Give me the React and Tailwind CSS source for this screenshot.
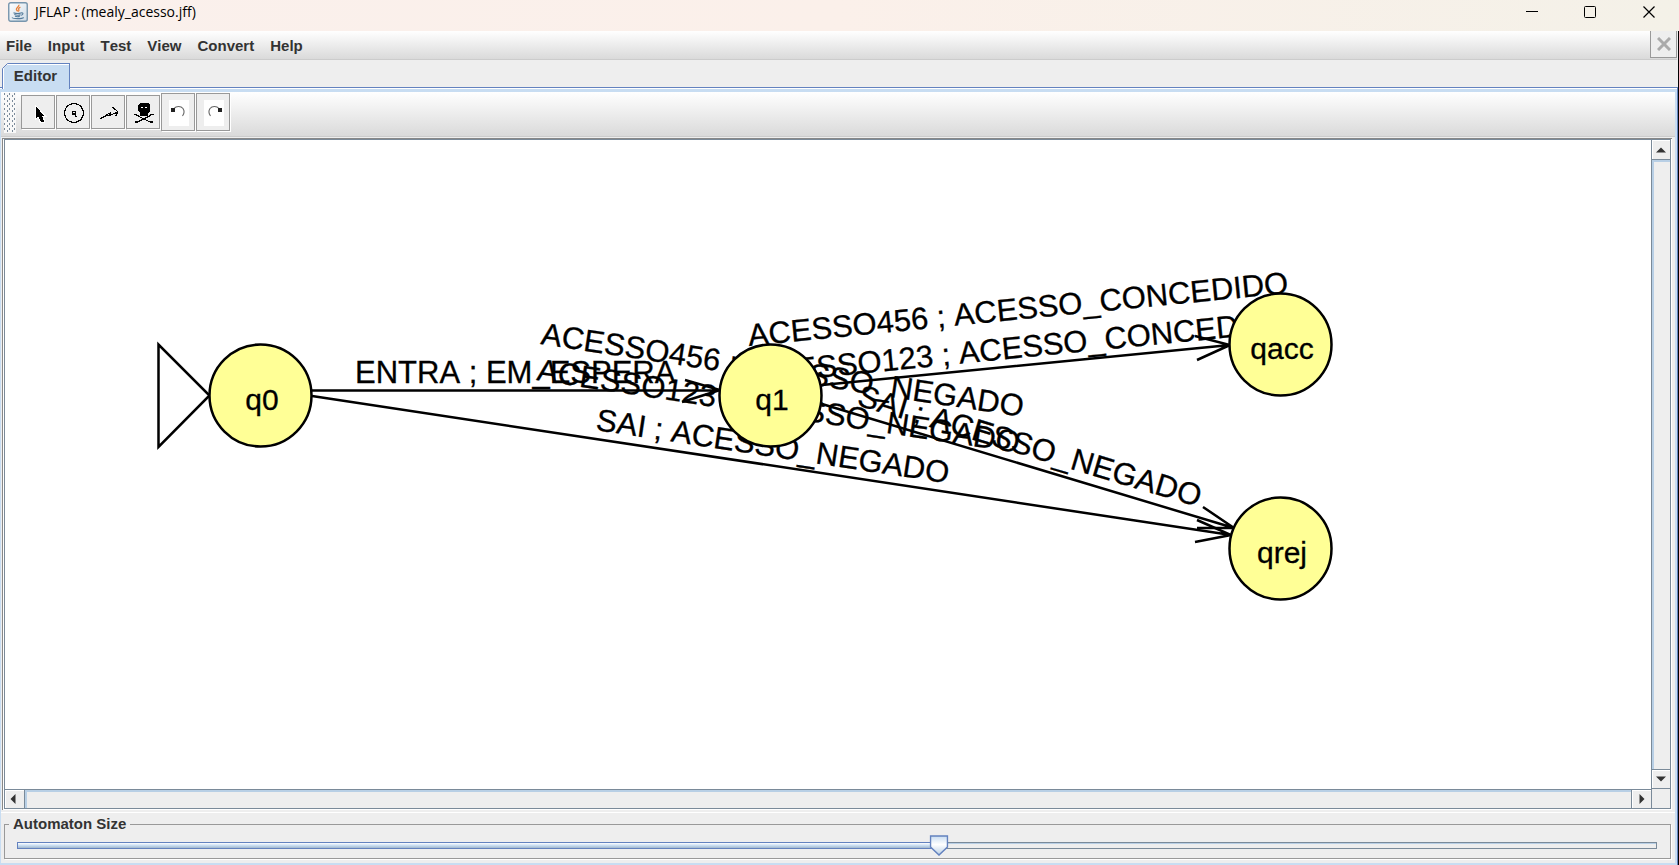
import { useState } from "react";

const MENUS = ["File", "Input", "Test", "View", "Convert", "Help"];

const STATES = [
  { name: "q0", x: 255, y: 255 },
  { name: "q1", x: 765, y: 255 },
  { name: "qacc", x: 1275, y: 204 },
  { name: "qrej", x: 1275, y: 408 },
];

const EDGES = [
  "M307 250.5H715M680 240L715 250L677 262",
  "M307 256L1226 395M1192 380L1226 395L1190 402",
  "M817 264L1229 388M1198 367L1229 388L1192 388",
  "M817 245L1225 205M1190 196L1225 205L1192 220",
];

const LABELS = [
  { text: "ENTRA ; EM_ESPERA", x: 350, y: 243, angle: 0 },
  { text: "ACESSO456 ; ACESSO_CONCEDIDO", x: 744, y: 206, angle: -5.6 },
  { text: "ACESSO123 ; ACESSO_CONCEDIDO", x: 749, y: 244, angle: -5.6 },
  { text: "ACESSO456 ; ACESSO_NEGADO", x: 535, y: 204, angle: 8.6 },
  { text: "ACESSO123 ; ACESSO_NEGADO", x: 531, y: 240, angle: 8.6 },
  { text: "SAI ; ACESSO_NEGADO", x: 590, y: 290, angle: 8.6 },
  { text: "SAI ; ACESSO_NEGADO", x: 851, y: 265, angle: 16.6 },
];

function JavaIcon() {
  return (
    <svg width="20" height="20" viewBox="0 0 20 20" aria-hidden="true">
      <defs>
        <linearGradient id="javaBg" x1="0" y1="0" x2="1" y2="1">
          <stop offset="0" stopColor="#ffffff" />
          <stop offset="1" stopColor="#cfdbe6" />
        </linearGradient>
      </defs>
      <rect x="0.75" y="0.75" width="18.5" height="18.5" rx="2" fill="url(#javaBg)" stroke="#7795ad" strokeWidth="1.4" />
      <path d="M10.8 2.8c.8 2-2.8 2.8-2.4 4.6.1.8 1 1.3 1.2 2M12.4 5.2c-1.6.7-2.2 1.4-1.6 2.4.4.7.1 1.3-.5 1.8" fill="none" stroke="#e8813a" strokeWidth="1.3" />
      <path d="M5.5 10.700c2 .8 6 .8 8 0M6.300 12.600c2 .7 4.800.700 6.300.1M7 14.300c1.500.5 3.500.5 4.800.1M13.300 10.900c2.200-.6 2.300 1.800-.3 2.400" fill="none" stroke="#557c9c" strokeWidth="1.1" />
      <path d="M4 15.500c1 1.500 10 1.500 11.700 0" fill="none" stroke="#557c9c" strokeWidth="1.1" />
    </svg>
  );
}

function CursorIcon() {
  return (
    <svg width="32" height="32" viewBox="0 0 32 32" shapeRendering="crispEdges" aria-hidden="true">
      <path d="M13 9v14.500l3-2.500 2.500 5.500h4v-2l-2-4.500h3z" fill="#000" stroke="#fff" strokeWidth="1" />
    </svg>
  );
}

function StateIcon() {
  return (
    <svg width="32" height="32" viewBox="0 0 32 32" shapeRendering="crispEdges" aria-hidden="true">
      <circle cx="17" cy="17" r="9.5" fill="none" stroke="#000" strokeWidth="1.2" />
      <path d="M15 15.500h3.500v5M15.500 15v3h3M18 20.500h2" fill="none" stroke="#000" strokeWidth="1.3" />
    </svg>
  );
}

function TransitionIcon() {
  return (
    <svg width="32" height="32" viewBox="0 0 32 32" shapeRendering="crispEdges" aria-hidden="true">
      <path d="M8 22.500l5-2 2-2 3-1.500v2.500l4-2 4-1.500M20.500 11.500l3 2 2.500 2.500-2.500 4M14 19.500h4" fill="none" stroke="#000" strokeWidth="1.2" />
    </svg>
  );
}

function SkullIcon() {
  return (
    <svg width="32" height="32" viewBox="0 0 32 32" shapeRendering="crispEdges" aria-hidden="true">
      <path d="M13 7h8l2 2v6l-2 2v3h-8v-3l-2-2V9z" fill="#000" />
      <path d="M14 11h2v1h-2zM18 11h2v1h-2z" fill="#fff" />
      <path d="M7 18.500h2l3 2 6 3 5 2.500h3M26.500 18.500h-2l-3 2-6 3-5 2.500h-3" fill="none" stroke="#000" strokeWidth="1.3" />
    </svg>
  );
}

function TurnIcon({ flip }) {
  return (
    <svg width="32" height="36" viewBox="0 0 32 36" aria-hidden="true">
      <rect x="7" y="6" width="20" height="26" fill="#fff" />
      <g transform={flip ? "translate(34 0) scale(-1 1)" : undefined}>
        <path d="M12 14.500C14.500 11.500 19 12 21 14.500C23 17.500 22 20 20.500 22" fill="none" stroke="#666" strokeWidth="1.1" />
        <path d="M9 14h4v4H9z" fill="#222" />
      </g>
    </svg>
  );
}

const TOOLS = [
  { label: "Attribute Editor", icon: <CursorIcon /> },
  { label: "State Creator", icon: <StateIcon /> },
  { label: "Transition Creator", icon: <TransitionIcon /> },
  { label: "Deleter", icon: <SkullIcon /> },
  { label: "Undo", icon: <TurnIcon />, tall: true },
  { label: "Redo", icon: <TurnIcon flip />, tall: true },
];

function TitleBar() {
  return (
    <header className="flex h-[31px] shrink-0 items-center bg-linear-to-r from-[#faf0ec] via-[#fbf0ea] to-[#f4f1e8] pl-2">
      <div className="-mt-2 flex items-center gap-[7px]">
        <JavaIcon />
        <h1 className="pt-px font-['Open_Sans','Noto_Sans',sans-serif] text-[14px] leading-5 text-black">JFLAP : (mealy_acesso.jff)</h1>
      </div>
      <div className="-mt-2 ml-auto flex h-6">
        <button aria-label="Minimize" className="flex w-[58px] items-center justify-center">
          <svg width="12" height="12" viewBox="0 0 12 12"><path d="M0 5.500h12" stroke="#000" fill="none" /></svg>
        </button>
        <button aria-label="Maximize" className="flex w-[58px] items-center justify-center">
          <svg width="12" height="12" viewBox="0 0 12 12"><rect x="0.5" y="0.5" width="11" height="11" rx="1" stroke="#000" fill="none" /></svg>
        </button>
        <button aria-label="Close" className="flex w-[60px] items-center justify-center">
          <svg width="12" height="12" viewBox="0 0 12 12"><path d="M0.500 0.500l11 11M11.500 0.500l-11 11" stroke="#000" strokeWidth="1.2" fill="none" /></svg>
        </button>
      </div>
    </header>
  );
}

function MenuBar() {
  return (
    <div className="flex h-[29px] shrink-0 border-b border-[#ccc] bg-linear-to-b from-white to-[#dadada]">
      <nav className="flex items-center gap-4 pl-[6px] [font-kerning:none]">
        {MENUS.map((menu) => (
          <button key={menu} className="pt-px text-[15px] leading-5 font-bold text-[#333]">{menu}</button>
        ))}
      </nav>
      <button aria-label="Close editor" className="ml-auto flex h-[27px] w-[27px] items-center justify-center border-x border-b border-[#999] bg-[#eee]">
        <svg width="14" height="14" viewBox="0 0 14 14"><path d="M1 1l12 12M13 1l-12 12" stroke="#aaa" strokeWidth="3" fill="none" /></svg>
      </button>
    </div>
  );
}

function Toolbar() {
  return (
    <div className="flex h-[45px] shrink-0 items-start border-b border-[#ccc] bg-linear-to-b from-white to-[#dadada] pt-px pl-[3px]">
      <svg width="12" height="40" aria-hidden="true">
        <defs>
          <pattern id="grip" width="5" height="5" patternUnits="userSpaceOnUse">
            <rect width="5" height="5" fill="#f8f8f8" />
            <rect width="1" height="2" fill="#7a8a99" />
            <rect x="3" y="2" width="1" height="2" fill="#7a8a99" />
          </pattern>
        </defs>
        <rect width="12" height="40" fill="url(#grip)" />
      </svg>
      <div className="ml-[5px] flex items-center gap-px">
        {TOOLS.map((tool) => (
          <button
            key={tool.label}
            aria-label={tool.label}
            className={`flex w-[34px] items-center justify-center border border-[#999] bg-[#eee] shadow-[1px_1px_0_#fff] ${tool.tall ? "h-[38px]" : "h-[34px]"}`}
          >
            {tool.icon}
          </button>
        ))}
      </div>
    </div>
  );
}

function Automaton() {
  return (
    <svg className="h-full w-full bg-white [font-kerning:none]" role="img" aria-label="Mealy machine">
      <g fill="#000" stroke="#000" strokeWidth="0.3" fontSize="31">
        {LABELS.map((l, i) => (
          <text key={i} transform={`translate(${l.x} ${l.y}) rotate(${l.angle})`}>{l.text}</text>
        ))}
      </g>
      <g fill="none" stroke="#000" strokeWidth="2.5">
        {EDGES.map((d) => <path key={d} d={d} />)}
      </g>
      <path d="M153.500 204.500V307L204.500 255.500z" fill="#fff" stroke="#000" strokeWidth="2.5" />
      {STATES.map((s) => (
        <g key={s.name}>
          <circle cx={s.x + 0.5} cy={s.y + 0.5} r="51" fill="#ffff96" stroke="#000" strokeWidth="2.5" />
          <text x={s.x + 2} y={s.y + 15} textAnchor="middle" fontSize="30" stroke="#000" strokeWidth="0.3">{s.name}</text>
        </g>
      ))}
    </svg>
  );
}

function ScrollArrow({ d, label, className }) {
  return (
    <button aria-label={label} className={`flex items-center justify-center border-[#7a8a99] bg-[#eee] shadow-[inset_1px_1px_0_#fff] ${className}`}>
      <svg width="10" height="10" viewBox="0 0 10 10"><path d={d} fill="#333" /></svg>
    </button>
  );
}

function ScrollPane() {
  return (
    <div className="flex min-h-0 flex-1 border-t border-l border-[#888] bg-white pr-px pb-px">
      <div className="ml-px grid min-h-0 flex-1 grid-cols-[minmax(0,1fr)_19px] grid-rows-[minmax(0,1fr)_19px] border border-[#7a8a99] bg-[#eee]">
        <Automaton />
        <div className="flex flex-col border-l border-[#7a8a99]">
          <ScrollArrow label="Scroll up" d="M0 7.500L5 2.500L10 7.500z" className="h-5 border-b" />
          <div className="flex-1 border-t-2 border-l-2 border-[#b8cfe5]" />
          <ScrollArrow label="Scroll down" d="M0 2.500L5 7.500L10 2.500z" className="h-5 border-y" />
        </div>
        <div className="flex border-t border-[#7a8a99]">
          <ScrollArrow label="Scroll left" d="M7.500 0L2.500 5L7.500 10z" className="w-5 border-r pr-1" />
          <div className="flex-1 border-t-2 border-l-2 border-[#b8cfe5]" />
          <ScrollArrow label="Scroll right" d="M2.500 0L7.500 5L2.500 10z" className="w-5 border-l" />
        </div>
        <div className="border-l border-[#7a8a99]" />
      </div>
    </div>
  );
}

function SizePanel() {
  const [size, setSize] = useState(562);
  const percent = `${size / 10}%`;
  return (
    <div className="shrink-0 border-t border-white bg-[#eee] pt-[3px] pr-1 pb-1 pl-[3px]">
      <fieldset className="h-[43px] border border-[#999] pr-[13px] pl-3 shadow-[1px_1px_0_#fff]">
        <legend className="-ml-2 px-1 text-[15px] leading-4 font-bold text-[#333]">
          <label htmlFor="size">Automaton Size</label>
        </legend>
        <div className="relative mt-[3px] flex h-5 items-center">
          <div className="flex h-[7px] w-full border border-[#7a8a99] bg-[#eee] shadow-[inset_0_1px_0_#b8cfe5]">
            <div className="-m-px border border-[#6382bf] bg-linear-to-b from-white via-[#c8ddf2] to-[#a3b8cc]" style={{ width: percent }} />
          </div>
          <svg className="absolute top-0 -translate-x-1/2" style={{ left: percent }} width="19" height="21" viewBox="0 0 19 21" aria-hidden="true">
            <defs>
              <linearGradient id="thumb" x1="0" y1="0" x2="0" y2="1">
                <stop offset="0" stopColor="#c8ddf2" />
                <stop offset="0.45" stopColor="#ffffff" />
                <stop offset="1" stopColor="#b8cfe5" />
              </linearGradient>
            </defs>
            <path d="M1 1h17v11l-8.500 8l-8.500-8z" fill="url(#thumb)" stroke="#6382bf" strokeWidth="1.5" />
          </svg>
          <input
            id="size"
            type="range"
            min="0"
            max="1000"
            value={size}
            onChange={(e) => setSize(Number(e.target.value))}
            className="absolute inset-0 h-full w-full cursor-pointer opacity-0"
          />
        </div>
      </fieldset>
    </div>
  );
}

export default function App() {
  return (
    <div className="flex h-screen flex-col overflow-hidden bg-[#eee] font-['Liberation_Sans',Arial,sans-serif]">
      <TitleBar />
      <div className="flex min-h-0 flex-1 flex-col border-r border-black">
        <div className="flex shrink-0 flex-col pr-px">
          <MenuBar />
        </div>
        <div className="z-10 flex h-[27px] shrink-0 items-end pl-[2px]">
          <button className="relative -mb-[2px] h-[26px] w-[68px] border-x border-t border-[#6382bf] bg-[#c8ddf2] pr-px pb-[2px] text-[15px] leading-5 font-bold text-[#333] shadow-[inset_1px_1px_0_#fff]">
            Editor
            <svg className="absolute -top-px -left-px" width="7" height="7" viewBox="0 0 7 7" aria-hidden="true">
              <path d="M0 0h7L0 7z" fill="#eee" />
              <path d="M0.500 7V5.500L5.500 0.500H7" fill="none" stroke="#6382bf" />
            </svg>
          </button>
        </div>
        <div className="flex min-h-0 flex-1 flex-col border-t border-r border-[#6382bf] bg-[#c8ddf2]">
          <div className="h-px shrink-0 bg-white" />
          <div className="mt-[3px] mr-[2px] mb-[2px] ml-px flex min-h-0 flex-1 flex-col bg-[#eee]">
            <Toolbar />
            <div className="mt-px mr-[3px] mb-[2px] ml-px flex min-h-0 flex-1 flex-col">
              <ScrollPane />
            </div>
            <SizePanel />
          </div>
        </div>
      </div>
    </div>
  );
}
